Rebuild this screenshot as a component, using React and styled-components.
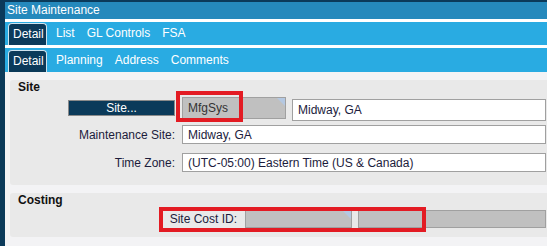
import React from 'react';
import styled, { createGlobalStyle } from 'styled-components';

const GlobalStyle = createGlobalStyle`
    html, body {
        margin: 0;
        padding: 0;
        background: #f3f3f5;
        font-family: "Liberation Sans", Arial, sans-serif;
        font-size: 12px;
        overflow: hidden;
    }
`;

const Frame = styled.div`
    width: 547px;
    height: 246px;
    box-sizing: border-box;
    border-left: 5px solid #0b3a5a;
    border-top: 2px solid #0b3a5a;
    background: #f3f3f5;
    display: flex;
    flex-direction: column;
`;

const TitleBar = styled.div`
    height: 17px;
    line-height: 17px;
    padding-left: 2px;
    background: #2589bc;
    color: #fff;
    border-bottom: 3px solid #fff;
`;

const TabBar = styled.div`
    height: ${p => p.height}px;
    background: #29abe2;
    display: flex;
    align-items: flex-end;
    padding-left: 3px;
    border-bottom: ${p => (p.last ? 'none' : '3px solid #fff')};
`;

const Tab = styled.div`
    height: 22px;
    line-height: 21px;
    box-sizing: border-box;
    color: #fff;
    padding: 0 6px;
    white-space: nowrap;
    &.active {
        width: 39px;
        padding: 0 0 0 4px;
        margin-right: 3px;
        background: #0b3a5a;
        border: 1px solid #cfe3ee;
        border-bottom: none;
        border-radius: 4px 4px 0 0;
        overflow: hidden;
    }
`;

const Content = styled.div`
    flex: 1;
    padding: 8px 0 0 5px;
    display: flex;
    flex-direction: column;
    gap: 8px;
`;

const Panel = styled.div`
    background: #e9e9e9;
    border-radius: 3px 0 0 3px;
    height: ${p => p.height}px;
    box-sizing: border-box;
    padding-right: 1px;
`;

const PanelTitle = styled.div`
    height: ${p => p.height}px;
    line-height: 14px;
    padding-left: 8px;
    font-weight: bold;
    color: #111;
`;

const Row = styled.div`
    position: relative;
    display: flex;
    align-items: stretch;
    height: ${p => p.height}px;
    margin-top: ${p => p.top || 0}px;
`;

const LabelCell = styled.div`
    width: ${p => p.width}px;
    flex: none;
    display: flex;
    align-items: center;
    justify-content: flex-end;
    margin-right: ${p => p.gap}px;
    color: #1c1c3c;
    white-space: nowrap;
`;

const LookupButton = styled.div`
    width: 107px;
    box-sizing: border-box;
    background: #0b3a5a;
    border: 1px solid #8a8a8a;
    color: #fff;
    display: flex;
    align-items: center;
    justify-content: center;
`;

const Field = styled.div`
    position: relative;
    box-sizing: border-box;
    width: ${p => (p.width ? `${p.width}px` : 'auto')};
    flex: ${p => (p.width ? 'none' : '1')};
    margin-right: ${p => p.gap || 0}px;
    margin-top: ${p => p.offset || 0}px;
    margin-bottom: ${p => (p.offset ? -p.offset : 0)}px;
    background: ${p => (p.locked ? '#c0c0c0' : '#fff')};
    border: 1px solid #a0a0a0;
    color: ${p => (p.locked ? '#333' : '#1c1c3c')};
    display: flex;
    align-items: center;
    padding-left: 5px;
    white-space: nowrap;
    overflow: hidden;
    &::after {
        content: '';
        display: ${p => (p.flag ? 'block' : 'none')};
        position: absolute;
        top: 0;
        right: 0;
        border-style: solid;
        border-width: 0 8px 8px 0;
        border-color: transparent #b4c8e2 transparent transparent;
    }
`;

const Highlight = styled.div`
    position: absolute;
    left: ${p => p.x}px;
    top: ${p => p.y}px;
    width: ${p => p.w}px;
    height: ${p => p.h}px;
    box-sizing: border-box;
    border: 4px solid #e31b23;
    pointer-events: none;
`;

const topTabs = ['Detail', 'List', 'GL Controls', 'FSA'];
const subTabs = ['Detail', 'Planning', 'Address', 'Comments'];

export default function App() {
    return (
        <>
            <GlobalStyle />
            <Frame>
                <TitleBar>Site Maintenance</TitleBar>
                <TabBar height={23}>
                    {topTabs.map((t, i) => (
                        <Tab key={t} className={i === 0 ? 'active' : ''}>{t}</Tab>
                    ))}
                </TabBar>
                <TabBar height={24} last>
                    {subTabs.map((t, i) => (
                        <Tab key={t} className={i === 0 ? 'active' : ''}>{t}</Tab>
                    ))}
                </TabBar>
                <Content>
                    <Panel height={105}>
                        <PanelTitle height={17}>Site</PanelTitle>
                        <Row height={22}>
                            <LabelCell width={165} gap={7}>
                                <LookupButton>Site...</LookupButton>
                            </LabelCell>
                            <Field width={104} gap={6} locked flag>MfgSys</Field>
                            <Field offset={2}>Midway, GA</Field>
                            <Highlight x={166} y={-6} w={67} h={31} />
                        </Row>
                        <Row height={19} top={6}>
                            <LabelCell width={165} gap={7}>Maintenance Site:</LabelCell>
                            <Field>Midway, GA</Field>
                        </Row>
                        <Row height={19} top={9}>
                            <LabelCell width={165} gap={7}>Time Zone:</LabelCell>
                            <Field>(UTC-05:00) Eastern Time (US &amp; Canada)</Field>
                        </Row>
                    </Panel>
                    <Panel height={44}>
                        <PanelTitle height={17}>Costing</PanelTitle>
                        <Row height={18}>
                            <LabelCell width={227} gap={8}>Site Cost ID:</LabelCell>
                            <Field width={107} gap={6} locked flag />
                            <Field locked />
                            <Highlight x={149} y={-3} w={267} h={25} />
                        </Row>
                    </Panel>
                </Content>
            </Frame>
        </>
    );
}
